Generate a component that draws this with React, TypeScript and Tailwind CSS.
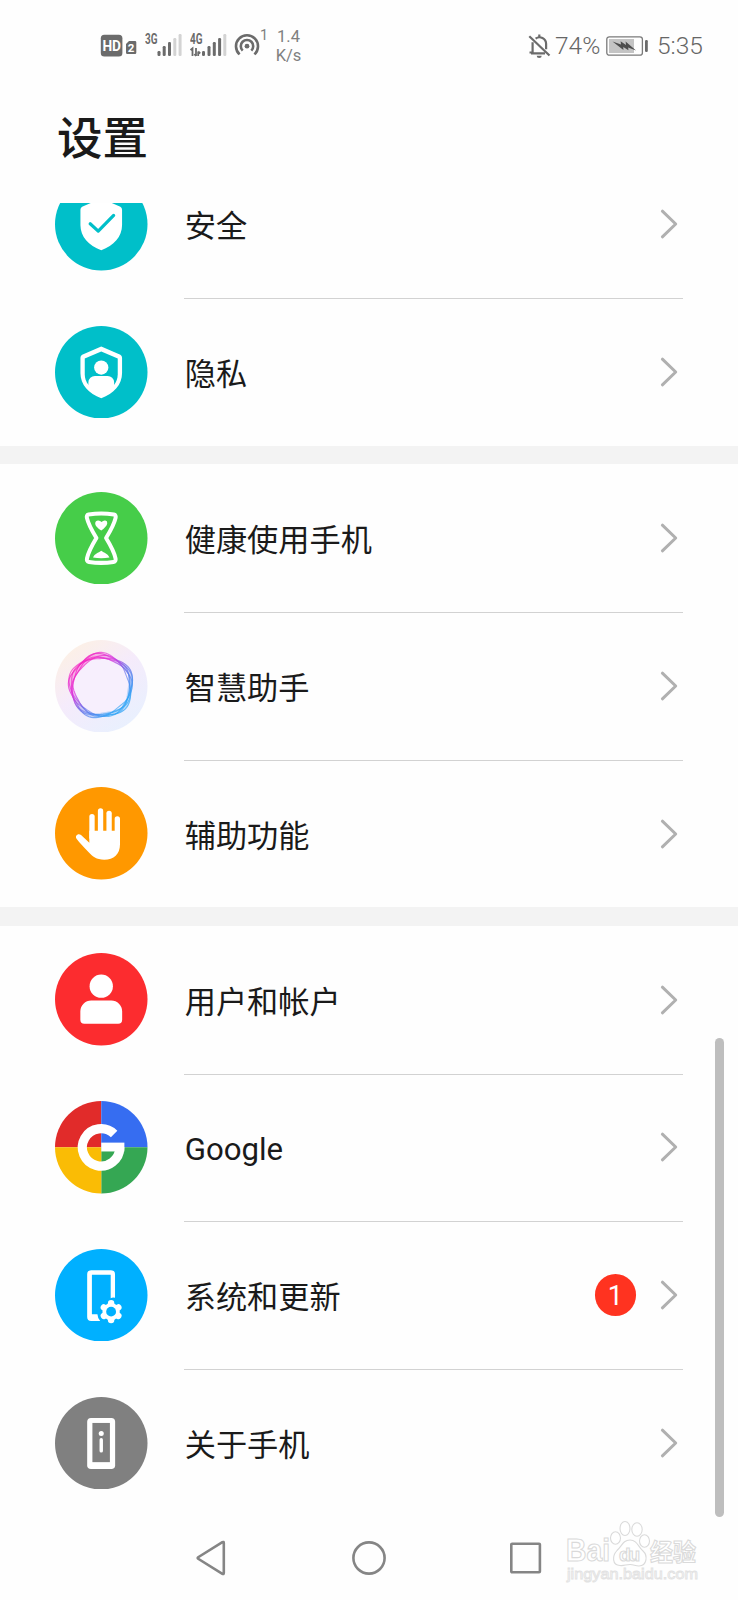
import type { ReactNode } from "react";

const WHITE = "#ffffff";
const GRAY = "#6b6b6b";

/* ---------- status bar ---------- */

function SignalBars({ label, x, active, data }: { label: string; x: number[]; active: number; data?: boolean }) {
	const tops = [21, 16, 12, 8, 4];
	return (
		<svg width="37" height="30" viewBox="0 0 37 30">
			<text x="0" y="14" fontSize="14" fontWeight="700" fontFamily="Roboto, sans-serif" fill={GRAY} textLength="12.5" lengthAdjust="spacingAndGlyphs">
				{label}
			</text>
			{x.map((left, i) => (
				<rect key={left} x={left} y={tops[i]} width="3" height={26 - tops[i]} rx="1.2" fill={i < active ? GRAY : "#d3d3d3"} />
			))}
			{data && (
				<path d="M0.5 20l2-1.6V26M6 18v8M6 26l-1.6-2M8.2 26v-4.5M8.2 21.5l2 2" fill="none" stroke={GRAY} strokeWidth="1.8" />
			)}
		</svg>
	);
}

function StatusBar() {
	return (
		<header className="flex h-[92px] items-start pt-[30px] pl-[100px] pr-[34px] font-['Roboto',sans-serif] text-[#666666]">
			<svg className="shrink-0" width="37" height="30" viewBox="0 0 37 30">
				<rect x="0.8" y="4.8" width="21.6" height="21.6" rx="3.5" fill={GRAY} />
				<text x="2.4" y="20.8" fontSize="15" fontWeight="700" fontFamily="Roboto, sans-serif" fill={WHITE} textLength="18.6" lengthAdjust="spacingAndGlyphs">
					HD
				</text>
				<path d="M29 11h6a1.3 1.3 0 0 1 1.3 1.3v10.4A1.3 1.3 0 0 1 35 24h-7.7a1.3 1.3 0 0 1-1.3-1.3V14z" fill={GRAY} />
				<text x="27.8" y="21.8" fontSize="11.5" fontWeight="700" fontFamily="Roboto, sans-serif" fill={WHITE}>
					2
				</text>
			</svg>
			<div className="ml-[8px] flex shrink-0 gap-[7.5px]">
				<SignalBars label="3G" x={[12.5, 17.7, 23, 28.3, 33.6]} active={3} />
				<SignalBars label="4G" x={[12, 17.5, 22.8, 28.1, 33.3]} active={4} data />
			</div>
			<svg className="ml-[7.5px] shrink-0" width="26" height="30" viewBox="0 0 26 30">
				<g fill="none" stroke={GRAY} strokeWidth="2.6">
					<path d="M5.6 24.4a11 11 0 1 1 14.8 0" />
					<path d="M8.7 20.6a6.2 6.2 0 1 1 8.6 0" />
				</g>
				<circle cx="13" cy="16.2" r="2.4" fill={GRAY} />
			</svg>
			<span className="-mt-px w-[8px] text-[14.5px] leading-[14px] text-[#808080]">1</span>
			<div className="-mt-[3px] ml-[7.5px] w-[26px] text-center text-[16.5px] leading-[19px] text-[#808080]">
				<div>1.4</div>
				<div>K/s</div>
			</div>

			<div className="ml-auto flex h-8 shrink-0 items-center">
				<svg className="mr-[4px]" width="23" height="26" viewBox="0 0 23 26">
					<g fill="none" stroke={GRAY} strokeWidth="2.2">
						<path d="M1.3 3.2L21.5 22.5" />
						<path d="M4.6 9.2V19.5H1.5M3 20.3H17" />
						<path d="M7.6 5.6a6.6 6.6 0 0 1 10.5 5.2v5.4" />
						<path d="M11.3 1.5v2.6" />
					</g>
					<path d="M8.7 22.8h5a2.5 2.2 0 0 1-5 0z" fill={GRAY} />
				</svg>
				<span className="w-[51px] pt-px text-[24.5px] font-light">74%</span>
				<svg className="mr-[8px]" width="43" height="20" viewBox="0 0 43 20">
					<rect x="0.8" y="0.8" width="35.6" height="18.4" rx="2.5" fill="none" stroke="#7a7a7a" strokeWidth="1.3" />
					<rect x="3" y="3" width="25" height="14" fill="#c4c4c4" />
					<path d="M6.5 5.5L15 8.4 14.6 5.3 20 9 19.6 5.6 30 14.4 22.2 11.5 22.4 14.2 17.3 11 17.4 14z" fill="#4d4d4d" />
					<rect x="39" y="4" width="2.8" height="12" rx="1.2" fill={GRAY} />
				</svg>
				<span className="w-[47px] pt-px text-[24.5px] font-light">5:35</span>
			</div>
		</header>
	);
}

/* ---------- row icons, all on a 92px disc ---------- */

const SHIELD = "M44.8 20.8Q46 20 47.2 20.8L65 28.6Q66.7 29.5 66.7 31.5V47C66.7 58 58.5 67.6 46 71.8C33.5 67.6 25.3 58 25.3 47V31.5Q25.3 29.5 27 28.6Z";

function Disc({ color, children }: { color: string; children: ReactNode }) {
	return (
		<svg className="block shrink-0" width="92.5" height="92.5" viewBox="0 0 92 92">
			<circle cx="46" cy="46" r="46" fill={color} />
			{children}
		</svg>
	);
}

function SecurityIcon() {
	return (
		<Disc color="#00bfc9">
			<path d={SHIELD} fill={WHITE} />
			<path d="M35 45.5l8 7.3 15.3-15.6" fill="none" stroke="#00bfc9" strokeWidth="3.2" strokeLinecap="round" strokeLinejoin="round" />
		</Disc>
	);
}

function PrivacyIcon() {
	return (
		<Disc color="#00bfc9">
			<path d={SHIELD} fill={WHITE} />
			<path d="M46 25.4L62.4 32.2V48C62.4 52 61 55.5 58.9 58.4H33.1C31 55.5 29.6 52 29.6 48V32.2Z" fill="#00bfc9" />
			<circle cx="46" cy="41.3" r="7.1" fill={WHITE} />
			<path d="M33.2 60V56a6.5 6.5 0 0 1 6.5-6.3h12.6a6.5 6.5 0 0 1 6.5 6.3v4z" fill={WHITE} />
		</Disc>
	);
}

function HourglassIcon() {
	return (
		<Disc color="#46cd49">
			<path
				d="M33.4 22.4Q46 20.3 58.6 22.4Q61 23 60.2 26C58.6 33 55.5 38 50.8 45.8C55.5 53.5 58.6 59 60.2 66Q60.8 69.2 58.2 69.6Q46 71.4 33.8 69.6Q31.2 69.2 31.8 66C33.4 59 36.5 53.5 41.2 45.8C36.5 38 33.4 33 31.8 26Q31 23 33.4 22.4Z"
				fill="none"
				stroke={WHITE}
				strokeWidth="4"
				strokeLinejoin="round"
			/>
			<path d="M46 38.4C43 36 39.8 33.7 40 31Q40.2 28.4 43 28.3Q45 28.3 46.3 29.8Q48 28 50 28.3Q52.2 28.6 52 31C51.8 33.8 48.8 36 46 38.4z" fill={WHITE} />
			<path d="M37.8 65.2C39.5 61.4 43 60.6 46 58.5C49 60.6 52.5 61.4 54.2 65.2Q46 66.6 37.8 65.2z" fill={WHITE} />
		</Disc>
	);
}

// closed five-lobed curve around the disc centre
function wave(radius: number, amp: number, phase: number, dx = 0, dy = 0) {
	const points: string[] = [];
	for (let deg = 0; deg < 360; deg += 4) {
		const t = (deg * Math.PI) / 180;
		const r = radius + amp * Math.cos(5 * t + phase);
		points.push(`${(45.8 + dx + r * Math.cos(t)).toFixed(2)} ${(45.6 + dy + r * Math.sin(t)).toFixed(2)}`);
	}
	return `M${points.join("L")}Z`;
}

const waves = [
	wave(31.4, 1.6, 2.6, 0.3, 0.2),
	wave(31, 1.5, 1.5, -0.4, -0.8),
	wave(30, 1.2, 0.4, 0, 0.4),
	wave(29, 1.4, 3.6, 0.8, 0.4),
	wave(28.2, 0.9, 2.4, 1, 0.6),
	wave(28.6, 1.3, 5, -0.2, 0.2),
];

function AssistantIcon() {
	return (
		<svg className="block shrink-0" width="92.5" height="92.5" viewBox="0 0 92 92">
			<defs>
				<linearGradient id="halo" x1="0.15" y1="0.1" x2="0.75" y2="0.95">
					<stop offset="0" stopColor="#fcf0e6" />
					<stop offset="0.45" stopColor="#f5ebfb" />
					<stop offset="1" stopColor="#e9f0fe" />
				</linearGradient>
				<linearGradient id="wave" x1="0.2" y1="0.1" x2="0.85" y2="0.8">
					<stop offset="0" stopColor="#f419bd" />
					<stop offset="0.3" stopColor="#da35dc" />
					<stop offset="0.58" stopColor="#6b6be8" />
					<stop offset="1" stopColor="#2fa3f5" />
				</linearGradient>
			</defs>
			<circle cx="46" cy="46" r="46" fill="url(#halo)" />
			<circle cx="46" cy="46" r="29" fill="#f7effd" />
			<path d={wave(29.8, 1.3, 2.4, 0.3, 0)} fill="none" stroke="url(#wave)" strokeWidth="4.4" strokeOpacity="0.3" />
			{waves.map((d) => (
				<path key={d} d={d} fill="none" stroke="url(#wave)" strokeWidth="1.1" strokeOpacity="0.65" />
			))}
		</svg>
	);
}

function HandIcon() {
	return (
		<Disc color="#ff9800">
			<g stroke={WHITE} strokeWidth="5.3" strokeLinecap="round">
				<path d="M36.8 29.4V50" />
				<path d="M45.3 23.9V50" />
				<path d="M53.8 26.2V50" />
				<path d="M62 31.7V50" />
			</g>
			<path d="M34.15 43.5H64.65V57C64.65 67 58.5 72.3 49 72.3C41 72.3 37.5 69.5 33.5 65C29 60 24.5 55.5 21.4 51.4C19.5 48.6 23 45.6 25.9 47.8L34.15 55.4Z" fill={WHITE} />
		</Disc>
	);
}

function UserIcon() {
	return (
		<Disc color="#fc2c2f">
			<circle cx="46" cy="33" r="11.6" fill={WHITE} />
			<path d="M36 47.2H56A10.8 10.8 0 0 1 66.8 58V66.4A4 4 0 0 1 62.8 70.4H29.2A4 4 0 0 1 25.2 66.4V58A10.8 10.8 0 0 1 36 47.2Z" fill={WHITE} />
		</Disc>
	);
}

function GoogleIcon() {
	return (
		<svg className="block shrink-0" width="92.5" height="92.5" viewBox="0 0 92 92">
			<path d="M46 46V0A46 46 0 0 0 0 46Z" fill="#e12b2a" />
			<path d="M46 46H92A46 46 0 0 0 46 0Z" fill="#366df1" />
			<path d="M46 46V92A46 46 0 0 0 92 46Z" fill="#35a753" />
			<path d="M46 46H0A46 46 0 0 0 46 92Z" fill="#fabc05" />
			<path d="M58.8 32.8A18.6 18.6 0 1 0 64.4 46" fill="none" stroke={WHITE} strokeWidth="9.2" />
			<rect x="46" y="41.4" width="23" height="8.8" fill={WHITE} />
		</svg>
	);
}

function SystemIcon() {
	return (
		<Disc color="#00b0ff">
			<path d="M36 21.2H55.7A4 4 0 0 1 59.7 25.2V48.6Q57.5 47.6 55.4 49V25.7H36.7V65H42.2Q42.4 69 45 71.7H36A4 4 0 0 1 32 67.7V25.2A4 4 0 0 1 36 21.2Z" fill={WHITE} />
			<g stroke={WHITE} strokeWidth="6.4" strokeLinecap="round">
				<path d="M55.8 54V70.6" />
				<path d="M48.6 58.1L63 66.5" />
				<path d="M48.6 66.5L63 58.1" />
			</g>
			<circle cx="55.8" cy="62.3" r="8.6" fill={WHITE} />
			<circle cx="55.8" cy="62.3" r="4.9" fill="#00b0ff" />
		</Disc>
	);
}

function AboutIcon() {
	return (
		<Disc color="#808080">
			<rect x="32" y="20.8" width="27.8" height="50.8" rx="3.8" fill={WHITE} />
			<rect x="37.2" y="25.8" width="17.4" height="39" fill="#808080" />
			<circle cx="46" cy="36.2" r="2.5" fill={WHITE} />
			<path d="M46 42.6V53.6" stroke={WHITE} strokeWidth="3.4" strokeLinecap="round" />
		</Disc>
	);
}

/* ---------- list ---------- */

type Item = { label: string; icon: ReactNode; badge?: number };

const groups: Item[][] = [
	[
		{ label: "安全", icon: <SecurityIcon /> },
		{ label: "隐私", icon: <PrivacyIcon /> },
	],
	[
		{ label: "健康使用手机", icon: <HourglassIcon /> },
		{ label: "智慧助手", icon: <AssistantIcon /> },
		{ label: "辅助功能", icon: <HandIcon /> },
	],
	[
		{ label: "用户和帐户", icon: <UserIcon /> },
		{ label: "Google", icon: <GoogleIcon /> },
		{ label: "系统和更新", icon: <SystemIcon />, badge: 1 },
		{ label: "关于手机", icon: <AboutIcon /> },
	],
];

function Row({ item, last }: { item: Item; last: boolean }) {
	return (
		<li className="flex h-[147.7px] items-center gap-[36.5px] px-[55px]">
			{item.icon}
			<div className={`flex h-[148.7px] flex-1 items-center self-start pr-[5px] ${last ? "" : "border-b border-[#d2d2d2]"}`}>
				<span className="pt-[5px] pl-[0.7px] text-[31.2px] leading-none text-[#1a1a1a]">{item.label}</span>
				<div className="ml-auto flex items-center gap-[24px]">
					{item.badge && (
						<span className="flex size-[41.5px] items-center justify-center rounded-full bg-[#ff3320] pt-[2px] text-[27px] leading-none text-white">
							{item.badge}
						</span>
					)}
					<svg width="18" height="30" viewBox="0 0 18 30">
						<path d="M2.4 2.2L15.7 15 2.4 27.8" fill="none" stroke="#b0b0b0" strokeWidth="3" strokeLinecap="round" strokeLinejoin="round" />
					</svg>
				</div>
			</div>
		</li>
	);
}

function NavBar() {
	return (
		<nav className="flex h-[83px] pt-[23px] pl-[195px]">
			<svg width="32" height="36" viewBox="0 0 32 36">
				<path d="M28.8 3V33Q28.8 34.6 27.4 33.8L3.2 18.8Q2.2 18 3.2 17.2L27.4 2.2Q28.8 1.4 28.8 3Z" fill="none" stroke="#858585" strokeWidth="2.6" />
			</svg>
			<svg className="ml-[124px]" width="36" height="36" viewBox="0 0 36 36">
				<circle cx="18" cy="18" r="15.6" fill="none" stroke="#858585" strokeWidth="2.6" />
			</svg>
			<svg className="ml-[121px]" width="36" height="36" viewBox="0 0 36 36">
				<rect x="3.3" y="3.7" width="28.6" height="28.6" rx="0.8" fill="none" stroke="#858585" strokeWidth="2.6" />
			</svg>
		</nav>
	);
}

function Watermark() {
	return (
		<svg className="absolute top-[1514px] left-[563px]" width="142" height="76" viewBox="0 0 142 76">
			<g fill={WHITE} stroke="#dadada" strokeWidth="1.1">
				<g fontWeight="700" fontFamily="'Liberation Sans', 'Noto Sans CJK SC', sans-serif">
					<text x="3" y="47" fontSize="31" textLength="44" lengthAdjust="spacingAndGlyphs">Bai</text>
					<text x="87" y="47" fontSize="24" textLength="46" lengthAdjust="spacingAndGlyphs">经验</text>
				</g>
				<ellipse cx="52.5" cy="24" rx="5" ry="6.3" />
				<ellipse cx="62" cy="14.5" rx="5" ry="7" />
				<ellipse cx="74" cy="15.5" rx="5.2" ry="6.7" />
				<ellipse cx="81.5" cy="27" rx="5" ry="6.3" />
				<path d="M67 26C74 26 75 32.5 80 37C85 41.5 84 52 76 52C72 52 71 50.5 67 50.5C63 50.5 61 52 57 51.5C49 51 49 42 54 36.5C59 32 60 26 67 26Z" />
				<text x="56" y="46.5" fontSize="19" fontWeight="700" fontFamily="'Liberation Sans', sans-serif" textLength="21">du</text>
			</g>
			<text x="4" y="65" fontSize="15.5" fontFamily="'Liberation Sans', sans-serif" fill={WHITE} stroke="#e2e2e2" strokeWidth="0.9" textLength="131" lengthAdjust="spacingAndGlyphs">
				jingyan.baidu.com
			</text>
		</svg>
	);
}

export default function App() {
	return (
		<div className="relative mx-auto h-[1600px] w-[738px] overflow-hidden bg-[#fefefe] font-['Roboto','Noto_Sans_CJK_SC',sans-serif]" lang="zh-CN">
			<StatusBar />
			<h1 className="h-[111px] pt-[22px] pl-[57px] text-[45.5px] leading-[52px] font-medium text-[#1a1a1a]">设置</h1>

			{/* scrolled part way, so the first row is cut by the title area */}
			<main className="h-[1314px] overflow-hidden">
				<div className="-mt-[52.6px]">
					{groups.map((items, i) => (
						<section key={items[0].label}>
							{i > 0 && <div className="h-[18.5px] bg-[#f3f3f3]" />}
							<ul>
								{items.map((item, j) => (
									<Row key={item.label} item={item} last={j === items.length - 1} />
								))}
							</ul>
						</section>
					))}
				</div>
			</main>
			<NavBar />

			<div className="absolute top-[1038px] left-[715px] h-[479px] w-[9px] rounded-full bg-[#bebebe]" />
			<Watermark />
		</div>
	);
}
